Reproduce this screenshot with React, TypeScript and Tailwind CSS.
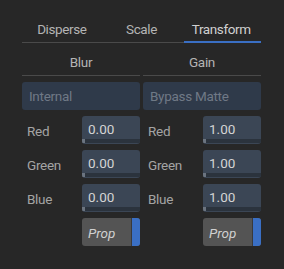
import React from "react";

const font = { fontFamily: 'Roboto, "Noto Sans", sans-serif' };

function NumField({ label, value }: { label: string; value: string }) {
  return (
    <div className="flex h-[28px] items-center">
      <span className="w-[60px] pl-[5px] pt-[2px] text-[13.5px] tracking-[-0.3px] text-[#a4a4a4]">{label}</span>
      <div className="relative h-[28px] w-[58px] overflow-hidden rounded-[3px] bg-[#3b4655]">
        <span className="absolute left-[6px] top-[4px] text-[13.5px] leading-[18px] text-[#d4d4d4]">
          {value}
        </span>
        <div className="absolute inset-x-0 bottom-[1px] h-[4px] bg-[#2b333d]">
          <div className="h-full w-[3px] bg-[#6b7480]" />
        </div>
      </div>
    </div>
  );
}

function PropButton() {
  return (
    <div className="flex h-[28px] items-center">
      <span className="w-[60px]" />
      <div className="flex h-[28px] w-[58px] overflow-hidden rounded-[3px] bg-[#545454]">
        <span className="flex-1 pl-[6px] pt-[1px] text-[13.5px] italic leading-[28px] text-[#d0d0d0]">Prop</span>
        <div className="w-px bg-[#3a3a3a]" />
        <div className="w-[8px] bg-[#3a6fc4]" />
      </div>
    </div>
  );
}

function Column({ title, mode, values }: { title: string; mode: string; values: string[] }) {
  return (
    <div className="flex w-[118px] flex-col">
      <div className="h-[33px] border-b border-[#4a4a4a] pt-[10px] text-center text-[13.5px] leading-[18px] tracking-[-0.3px] text-[#b4b4b4]">
        {title}
      </div>
      <div className="mt-[6px] flex h-[28px] items-center rounded-[3px] bg-[#2f3a4a] pl-[7px] pt-[1px] text-[13.5px] tracking-[-0.3px] text-[#6f7986]">
        {mode}
      </div>
      <div className="mt-[6px] flex flex-col gap-[6px]">
        <NumField label="Red" value={values[0]} />
        <NumField label="Green" value={values[1]} />
        <NumField label="Blue" value={values[2]} />
        <PropButton />
      </div>
    </div>
  );
}

export default function App() {
  return (
    <div className="h-[269px] w-[284px] bg-[#272727] pl-[22px]" style={font}>
      <div className="flex h-[43px] w-[239px] border-b border-[#4a4a4a] pt-[20px] text-[13.5px] leading-[18px] tracking-[-0.4px] text-[#b4b4b4]">
        <div className="flex-1 text-center">Disperse</div>
        <div className="flex-1 text-center">Scale</div>
        <div className="relative flex-1 text-center text-[#d0d0d0]">
          Transform
          <div className="absolute -bottom-px left-[3px] right-0 h-[2px] bg-[#3a6fc4]" />
        </div>
      </div>
      <div className="flex w-[239px] gap-[3px]">
        <Column title="Blur" mode="Internal" values={["0.00", "0.00", "0.00"]} />
        <Column title="Gain" mode="Bypass Matte" values={["1.00", "1.00", "1.00"]} />
      </div>
    </div>
  );
}
